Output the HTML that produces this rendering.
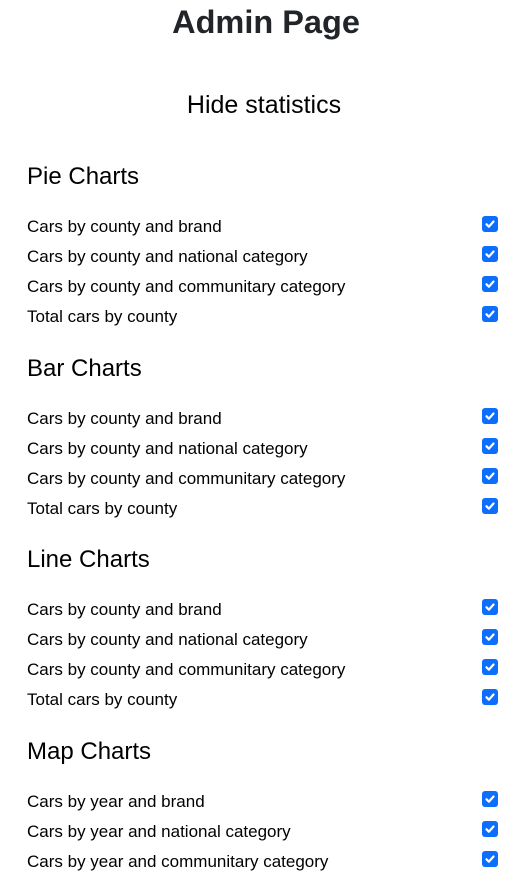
<!DOCTYPE html>
<html><head><meta charset="utf-8"><style>
body{margin:0;width:532px;height:885px;background:#fff;font-family:"Liberation Sans",sans-serif;color:#212529;position:relative;overflow:hidden}
.a{position:absolute;white-space:nowrap}
h1{position:absolute;left:0;width:532px;text-align:center;top:0px;margin:0;font-size:32.5px;font-weight:bold;line-height:44px}
.hs{left:0;width:528px;text-align:center;top:89px;font-size:25px;line-height:32px;color:#000}
.h{left:27px;font-size:24px;line-height:32px;color:#000}
.r{left:27px;font-size:17px;line-height:20px;color:#000}
.c{position:absolute;left:482px;width:16px;height:16px;border-radius:3px;background:#0d6efd}
.c svg{position:absolute;left:2px;top:2px}
</style></head><body>
<h1>Admin Page</h1>
<div class="a hs">Hide statistics</div>
<div id="x"></div>
<script>
var secs=[["Pie Charts",176,["Cars by county and brand","Cars by county and national category","Cars by county and communitary category","Total cars by county"]],
["Bar Charts",368,["Cars by county and brand","Cars by county and national category","Cars by county and communitary category","Total cars by county"]],
["Line Charts",559,["Cars by county and brand","Cars by county and national category","Cars by county and communitary category","Total cars by county"]],
["Map Charts",751,["Cars by year and brand","Cars by year and national category","Cars by year and communitary category"]]];
var h="";
secs.forEach(function(s){
h+='<div class="a h" style="top:'+(s[1]-15)+'px">'+s[0]+'</div>';
s[2].forEach(function(t,i){var y=s[1]+50+i*30;
h+='<div class="a r" style="top:'+(y-9)+'px">'+t+'</div>';
h+='<div class="c" style="top:'+(y-10)+'px"><svg width="12" height="12" viewBox="0 0 12 12"><path d="M2.5 6.3l2.4 2.4L9.5 3.5" stroke="#fff" stroke-width="2.2" fill="none" stroke-linecap="round" stroke-linejoin="round"/></svg></div>';});
});
document.getElementById("x").innerHTML=h;
</script>
</body></html>
